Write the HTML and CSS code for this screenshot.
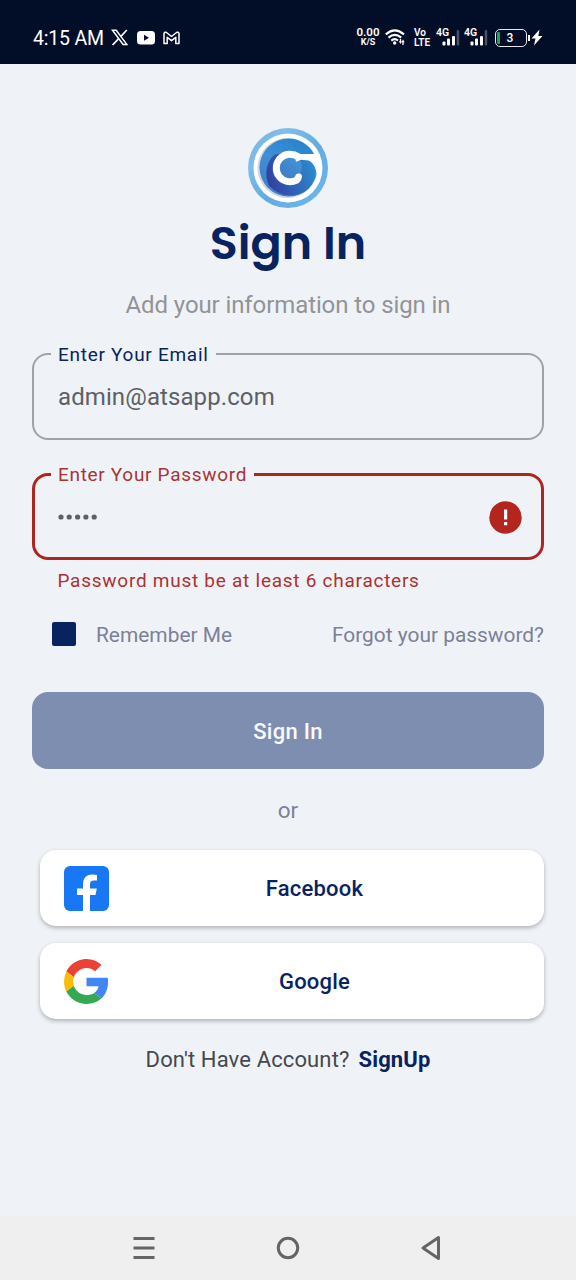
FILE: index.html
```html
<!DOCTYPE html>
<html lang="en">
<head>
<meta charset="utf-8">
<title>Sign In</title>
<link rel="stylesheet" href="styles.css">
</head>
<body>
<header class="status">
  <span class="clock">4:15 AM</span>
  <svg class="x-icon" width="18" height="17" viewBox="0 0 18 17" fill="none" stroke="#fff"><path d="M1.500 1.200h3.700l10.600 14.200h-3.700z" stroke-width="1.500"/><path d="M15.800 1 9.800 7.500M7.400 9.800 1.600 16" stroke-width="1.700"/></svg>
  <svg class="yt-icon" width="18" height="14" viewBox="0 0 18 14"><rect width="18" height="13.500" rx="3.500" fill="#fff"/><path d="M7 3.800v6l5-3z" fill="#020e27"/></svg>
  <svg class="gm-icon" width="17" height="14" viewBox="0 0 17 14" fill="none" stroke="#fff" stroke-width="1.500" stroke-linejoin="round"><path d="M1 12.500V2.500Q1.500.5 3.500 1.500l5 4 5-4Q15.500.5 16 2.500v10h-3.200V6.300L8.500 9.700 4.200 6.300v6.200z"/></svg>
  <span class="spacer"></span>
  <span class="speed"><b>0.00</b><small>K/S</small></span>
  <svg class="wifi" width="20" height="17" viewBox="0 0 20 17" fill="none" stroke="#fff" stroke-width="2.100"><path d="M.8 5.400Q9.800-2.500 19 5.400M3.500 8.600Q9.800 3 16.200 8.600M6.300 11.600Q9.800 8.600 13 11.600"/><circle cx="9.700" cy="14" r="1.700" fill="#fff" stroke="none"/><path d="M15.500 10v3M18 13v3" stroke-width="1.300"/><path d="M13.800 12.300h3.400L15.500 15zM16.300 13.300h3.400L18 10.500z" fill="#fff" stroke="none"/></svg>
  <span class="volte"><span>Vo</span><span>LTE</span></span>
  <span class="signal"><b>4G</b><svg width="23" height="17" viewBox="0 0 23 17"><g fill="#fff"><rect x="5.500" y="12.500" width="3" height="4" rx="1"/><rect x="10" y="9.500" width="3" height="7" rx="1"/><rect x="15" y="7" width="3" height="9.500" rx="1"/></g><rect x="19.700" y="1" width="2.500" height="15.500" rx="1" fill="#465268"/></svg></span>
  <span class="signal second"><b>4G</b><svg width="23" height="17" viewBox="0 0 23 17"><g fill="#fff"><rect x="5.500" y="12.500" width="3" height="4" rx="1"/><rect x="10" y="9.500" width="3" height="7" rx="1"/><rect x="15" y="7" width="3" height="9.500" rx="1"/></g><rect x="19.700" y="1" width="2.500" height="15.500" rx="1" fill="#465268"/></svg></span>
  <span class="battery">3</span>
  <svg class="bolt" width="12" height="17" viewBox="0 0 12 17"><path d="M8.500.5.500 9.500h4L3 16.500l8.500-9.500H7.300z" fill="#fff"/></svg>
</header>
<main class="screen">
  <svg class="logo" width="80" height="80" viewBox="0 0 80 80">
    <defs>
      <linearGradient id="ring" x1="0" y1="0" x2="1" y2="1"><stop offset="0" stop-color="#70b3e5"/><stop offset=".25" stop-color="#80bdea"/><stop offset=".55" stop-color="#60ace2"/><stop offset="1" stop-color="#72b9eb"/></linearGradient>
      <linearGradient id="disc" x1=".8" y1="0" x2=".25" y2="1"><stop offset="0" stop-color="#2383cb"/><stop offset=".5" stop-color="#3f8fd5"/><stop offset="1" stop-color="#3c80cb"/></linearGradient>
      <linearGradient id="swirl" x1="0" y1=".6" x2="1" y2=".3"><stop offset="0" stop-color="#333f9d"/><stop offset=".45" stop-color="#2f62b8"/><stop offset="1" stop-color="#2b8dce"/></linearGradient>
      <linearGradient id="core" x1="0" y1="1" x2="1" y2="0"><stop offset="0" stop-color="#3e78c2"/><stop offset="1" stop-color="#4199dc"/></linearGradient>
    </defs>
    <circle cx="40" cy="40" r="40" fill="url(#ring)"/>
    <circle cx="40" cy="40" r="34.500" fill="#fff"/>
    <circle cx="39.500" cy="40" r="30" fill="#d3d6de"/>
    <circle cx="40.500" cy="39.500" r="29" fill="url(#disc)"/>
    <path d="M28 26C19 31 15.500 46 21 57.500 32 70 51 71 61.500 59.500 67 53 68 46 66 36L52 29z" fill="url(#swirl)"/>
    <circle cx="42" cy="39.300" r="12" fill="url(#core)"/>
    <path d="M46 24.500q2 1.500 4 1.500h19.500l4 13-5 18q2-20-8-24.500L53 31.700l-5 2z" fill="#fff"/>
    <path d="M50 28.700A13.800 13.800 0 1 0 48.500 52.200q1.500-1.200 2-3.200" fill="none" stroke="#fff" stroke-width="7" stroke-linecap="round" stroke-linejoin="round"/>
  </svg>
  <h1>Sign In</h1>
  <p class="subtitle">Add your information to sign in</p>
  <fieldset class="field email"><legend>Enter Your Email</legend><span class="value">admin@atsapp.com</span></fieldset>
  <fieldset class="field password"><legend>Enter Your Password</legend>
    <svg class="dots" width="42" height="6" viewBox="0 0 42 6" fill="#5d6064"><circle cx="3" cy="3" r="2.600"/><circle cx="11.200" cy="3" r="2.600"/><circle cx="19.600" cy="3" r="2.600"/><circle cx="27.900" cy="3" r="2.600"/><circle cx="36.200" cy="3" r="2.600"/></svg>
    <svg class="alert" width="33" height="33" viewBox="0 0 33 33"><circle cx="16.500" cy="16.500" r="16.200" fill="#b3261e"/><path d="M15 8.500h3.200v10H15zM15 21h3.200v3.200H15z" fill="#fff"/></svg>
  </fieldset>
  <p class="error">Password must be at least 6 characters</p>
  <div class="options"><span class="check"></span><span class="remember">Remember Me</span><span class="forgot">Forgot your password?</span></div>
  <button class="submit">Sign In</button>
  <p class="or">or</p>
  <button class="social"><svg width="45" height="45" viewBox="0 0 45 45"><rect width="45" height="45" rx="6" fill="#1877f2"/><path d="M19 45V29h-6v-6.500h6V18q0-9.500 9.500-9.500 2.500 0 4.500.4v5.600h-3q-4 0-4 3.700v4.300h6.800L31.500 29H26v16z" fill="#fff"/></svg><span>Facebook</span></button>
  <button class="social"><svg width="45" height="45" viewBox="0 0 48 48"><path fill="#ea4335" d="M24 9.500c3.540 0 6.710 1.220 9.210 3.600l6.850-6.850C35.900 2.380 30.470 0 24 0 14.620 0 6.510 5.380 2.560 13.220l7.980 6.190C12.430 13.720 17.740 9.500 24 9.500z"/><path fill="#4285f4" d="M46.980 24.550c0-1.570-.15-3.090-.38-4.550H24v9.020h12.940c-.58 2.960-2.260 5.480-4.780 7.180l7.730 6c4.510-4.180 7.090-10.360 7.090-17.650z"/><path fill="#fbbc05" d="M10.530 28.590A14.500 14.500 0 0 1 9.770 24c0-1.600.27-3.140.76-4.590l-7.970-6.190A24 24 0 0 0 0 24c0 3.880.92 7.540 2.560 10.780z"/><path fill="#34a853" d="M24 48c6.480 0 11.930-2.130 15.890-5.810l-7.730-6C30.010 37.640 27.240 38.490 24 38.490c-6.260 0-11.570-4.220-13.470-9.910l-7.980 6.190C6.510 42.620 14.620 48 24 48z"/></svg><span>Google</span></button>
  <p class="signup"><span>Don't Have Account?</span><b>SignUp</b></p>
</main>
<nav class="navbar">
  <svg width="22" height="24" viewBox="0 0 22 24"><path d="M.5 2.500h21M.5 12h21M.5 21.500h21" stroke="#656565" stroke-width="3"/></svg>
  <svg width="24" height="24" viewBox="0 0 24 24"><circle cx="12" cy="12" r="9.700" fill="none" stroke="#656565" stroke-width="3"/></svg>
  <svg width="20" height="26" viewBox="0 0 20 26"><path d="M17.500 2.500v21L2 13z" fill="none" stroke="#656565" stroke-width="3" stroke-linejoin="round"/></svg>
</nav>
</body>
</html>
```
FILE: styles.css
```css
* { box-sizing: border-box; }
body { margin: 0; width: 576px; height: 1280px; display: flex; flex-direction: column; background: #eff3f8; font-family: Roboto, "Noto Sans", sans-serif; overflow: hidden; }
svg { display: block; flex: none; }
p, h1 { margin: 0; white-space: nowrap; }
button { font-family: inherit; border: 0; padding: 0; }
.status { height: 64px; padding: 11px 33px 0 33px; display: flex; align-items: center; background: #020e27; color: #fff; flex: none; }
.clock { font-size: 19.500px; line-height: 24px; width: 78px; padding-top: 2px; white-space: nowrap; letter-spacing: -.2px; }
.yt-icon { margin-left: 8px; }
.gm-icon { margin-left: 8px; }
.spacer { flex: 1; }
.speed { width: 24px; display: flex; flex-direction: column; align-items: center; margin-top: -3px; }
.speed b { font-size: 11.500px; line-height: 12px; font-weight: 600; }
.speed small { font-size: 9px; line-height: 9px; font-weight: 700; }
.wifi { margin-left: 5px; }
.volte { margin-left: 9px; width: 18px; display: flex; flex-direction: column; font-size: 10px; line-height: 10px; font-weight: 600; }
.signal { margin-left: 5px; width: 23px; position: relative; }
.signal b { position: absolute; left: -1px; top: -2px; font-size: 10.500px; line-height: 11px; font-weight: 600; }
.signal.second { margin-left: 5px; }
.battery { margin-left: 7px; width: 32px; height: 18px; border: 1.500px solid #e5e8ed; border-radius: 5px; display: flex; align-items: center; justify-content: center; padding-right: 2px; font-size: 12px; font-weight: 500; position: relative; }
.battery::before { content: ""; position: absolute; left: 1px; top: 2px; width: 3px; height: 12px; border-radius: 1px; background: #24a44b; }
.battery::after { content: ""; position: absolute; right: -4px; top: 5px; width: 2px; height: 6px; background: #fff; }
.bolt { margin-left: 4px; }
.screen { height: 1152px; padding: 64px 32px 0; display: flex; flex-direction: column; }
.logo { align-self: center; }
h1 { height: 70px; font-family: Poppins, Inter, sans-serif; font-weight: 600; font-size: 46px; line-height: 70px; text-align: center; color: #08235f; }
.subtitle { height: 32px; margin-top: 11px; font-size: 24px; line-height: 32px; letter-spacing: -.1px; text-align: center; color: #929396; }
.field { width: 512px; height: 97px; margin: 22px 0 0; padding: 0 18px 0 17px; border: 2px solid #a0a2a7; border-radius: 16px; min-width: 0; }
.field legend { padding: 0 7px; font-size: 19px; line-height: 21px; letter-spacing: .72px; color: #08235f; }
.value { display: block; padding: 17px 0 0 7px; font-size: 24px; line-height: 32px; letter-spacing: .1px; color: #5d6064; }
.field.email legend { padding-top: 2px; line-height: 19px; }
.field.password { margin-top: 23px; border: 3px solid #af2520; padding: 0 19px 0 16px; }
.field.password legend { padding-top: 1px; line-height: 22px; letter-spacing: .69px; color: #a93436; }
.dots { margin: 28px 0 0 7px; }
.alert { margin: -19px 0 0 auto; }
.error { height: 24px; margin: 9px 0 0 25.500px; font-size: 19px; line-height: 24px; letter-spacing: .74px; color: #b0302f; }
.options { height: 24px; margin-top: 29px; padding-left: 20px; display: flex; align-items: center; font-size: 20.900px; line-height: 24px; color: #7d8096; }
.check { width: 24px; height: 24px; border-radius: 2px; background: #08235f; }
.remember { margin-left: 20px; }
.remember, .forgot { padding-top: 2px; }
.forgot { margin-left: auto; }
.submit { height: 77px; margin-top: 46px; padding-top: 2px; border-radius: 16px; background: #7e8eb0; color: #f8f9fc; font-size: 22px; letter-spacing: .3px; font-weight: 500; flex: none; }
.or { height: 30px; margin-top: 26px; font-size: 22.500px; line-height: 30px; text-align: center; color: #7d8096; }
.social { width: 504px; height: 76px; margin: 25px 0 0 8px; padding: 0 24px; border-radius: 16px; background: #fff; box-shadow: 0 2px 4px rgba(0,0,0,.28); display: flex; align-items: center; flex: none; color: #08235f; font-size: 22px; letter-spacing: .2px; font-weight: 500; }
.social + .social { margin-top: 17px; }
.social span { flex: 1; text-align: center; padding-top: 1px; }
.signup { height: 30px; margin-top: 26px; display: flex; justify-content: center; gap: 9px; font-size: 22px; letter-spacing: .13px; line-height: 30px; color: #46484d; }
.signup b { font-weight: 700; color: #08235f; }
.navbar { height: 64px; flex: none; background: #efefef; display: flex; align-items: center; padding: 0 135px 0 133px; justify-content: space-between; }
```
